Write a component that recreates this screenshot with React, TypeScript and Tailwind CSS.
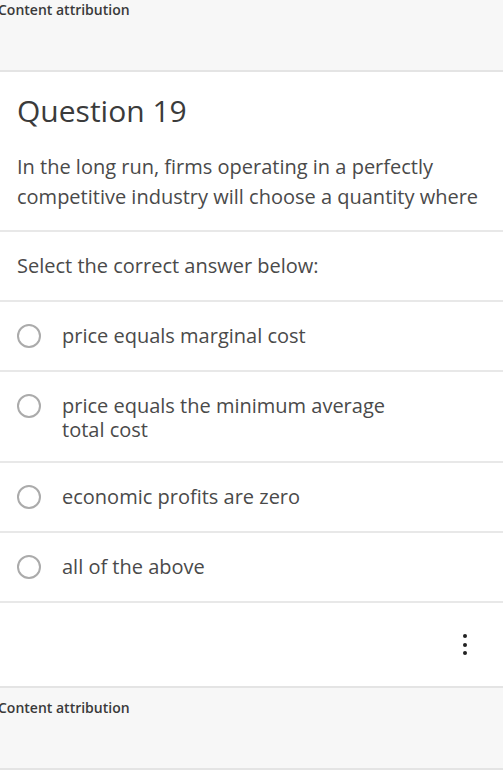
const options = [
  'price equals marginal cost',
  'price equals the minimum average total cost',
  'economic profits are zero',
  'all of the above',
]

export default function App() {
  return (
    <div className="w-[503px] bg-white text-[#4a4a4a] font-['Open_Sans',sans-serif]">
      {/* Top attribution band */}
      <div className="h-[72px] bg-[#f7f7f7] border-b-2 border-[#e4e4e4]">
        <p className="-ml-[2px] text-[14px] leading-[20px] font-semibold text-[#3a3a3a]">Content attribution</p>
      </div>

      {/* Question */}
      <div className="px-[17px] pt-[21px] pb-[18px] border-b-2 border-[#e8e8e8]">
        <h2 className="text-[30px] leading-[36px] text-[#3b3b3b]">Question 19</h2>
        <p className="mt-[23px] text-[20px] leading-[30px] pr-1">
          In the long run, firms operating in a perfectly competitive industry will choose a quantity where
        </p>
      </div>

      <div className="h-[70px] px-[17px] flex items-center border-b-2 border-[#e8e8e8]">
        <p className="text-[20px] leading-[30px]">Select the correct answer below:</p>
      </div>

      {/* Options */}
      {options.map((opt, i) => (
        <div
          key={opt}
          className={`flex items-start gap-[21px] pl-[17px] pr-[80px] pt-[22px] border-b-2 border-[#e8e8e8] ${i === 1 ? 'pb-[19px]' : 'pb-[22px]'}`}
        >
          <span className="shrink-0 w-[24px] h-[24px] rounded-full border-2 border-[#ababab]" />
          <span className="text-[20px] leading-[24px]">{opt}</span>
        </div>
      ))}

      {/* Menu */}
      <div className="h-[85px] flex items-center justify-end pr-[36px] border-b-2 border-[#e4e4e4]">
        <div className="flex flex-col gap-[4.5px]">
          <span className="w-[4px] h-[4px] rounded-full bg-[#222]" />
          <span className="w-[4px] h-[4px] rounded-full bg-[#222]" />
          <span className="w-[4px] h-[4px] rounded-full bg-[#222]" />
        </div>
      </div>

      {/* Bottom attribution band */}
      <div className="h-[82px] bg-[#f7f7f7] border-b-2 border-[#e4e4e4] pt-[10px]">
        <p className="-ml-[2px] text-[14px] leading-[20px] font-semibold text-[#3a3a3a]">Content attribution</p>
      </div>
    </div>
  )
}
